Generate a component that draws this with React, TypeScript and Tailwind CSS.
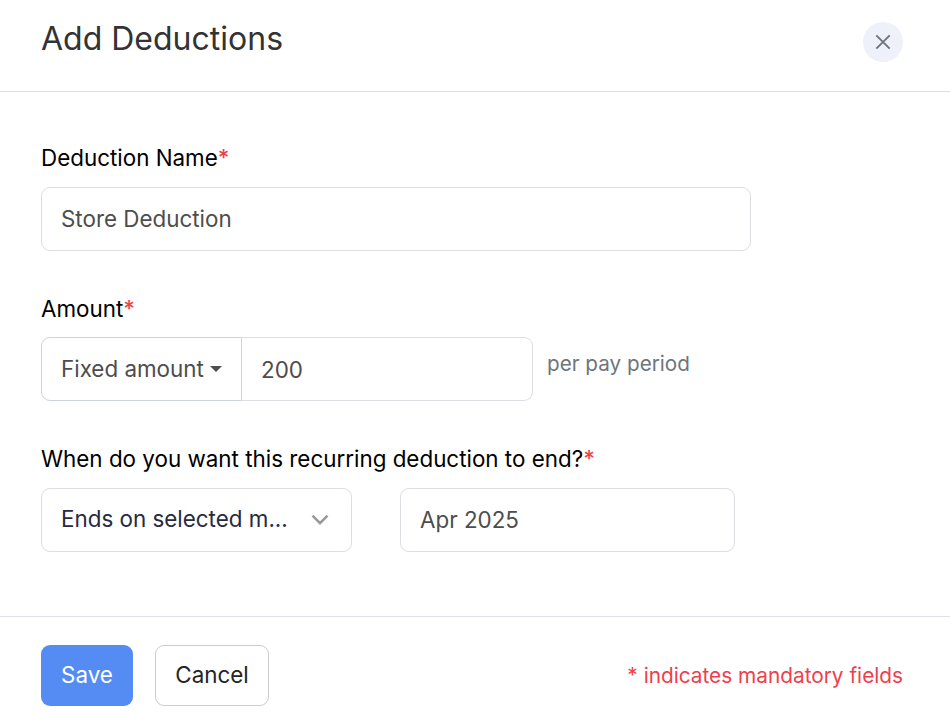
import { useState } from "react";
import type { ReactNode } from "react";

const FieldLabel = ({ children }: { children: ReactNode }) => (
	<label className="block text-[22.4px] leading-8 text-black">
		{children}
		<span className="font-medium text-[#f03e4d]">*</span>
	</label>
);

const CloseIcon = () => (
	<svg width="16" height="16" viewBox="0 0 16 16" fill="none">
		<path d="M1.3 1.3L14.7 14.7M14.7 1.3L1.3 14.7" stroke="#6c757d" strokeWidth="1.9" />
	</svg>
);

const ChevronIcon = () => (
	<svg width="18" height="12" viewBox="0 0 18 12" fill="none">
		<path d="M1.5 1.7L9 9.2L16.5 1.7" stroke="#999" strokeWidth="2.6" />
	</svg>
);

const CaretIcon = () => (
	<svg width="12" height="6" viewBox="0 0 12 6">
		<path d="M0 0H12L6 6Z" fill="#4d4d4d" />
	</svg>
);

export default function App() {
	const [name, setName] = useState("Store Deduction");
	const [amount, setAmount] = useState("200");
	const [endMonth, setEndMonth] = useState("Apr 2025");

	return (
		<div className="flex h-[722px] w-[950px] flex-col overflow-hidden bg-white font-[Inter,sans-serif]">
			<header className="flex h-[92px] shrink-0 items-start justify-between border-b border-[#dedede] pr-[47px] pl-[41px]">
				<h1 className="mt-[15px] text-[32px] leading-12 text-[#333]">
					Add Deductions
				</h1>
				<button
					type="button"
					aria-label="Close"
					className="mt-[22px] flex size-10 items-center justify-center rounded-full bg-[#eef1fa]"
				>
					<CloseIcon />
				</button>
			</header>

			<main className="flex h-[524px] shrink-0 flex-col pt-[50px] pl-[41px]">
				<section>
					<FieldLabel>Deduction Name</FieldLabel>
					<input
						className="mt-[13px] block h-16 w-[710px] rounded-[9px] border border-[#dedee2] px-[19px] pb-0.5 text-[22.4px] text-[#4d4d4d] outline-none"
						value={name}
						onChange={(e) => setName(e.target.value)}
					/>
				</section>

				<section className="mt-[42px]">
					<FieldLabel>Amount</FieldLabel>
					<div className="mt-[12px] flex h-16">
						<button
							type="button"
							className="flex w-[201px] items-center gap-[6px] rounded-l-[9px] border border-[#ced4da] pl-[19px] text-[22.4px] text-[#4d4d4d]"
						>
							Fixed amount
							<CaretIcon />
						</button>
						<input
							className="w-[291px] rounded-r-[9px] border border-l-0 border-[#dedee2] px-[19px] pt-0.5 text-[22.4px] text-[#4d4d4d] outline-none"
							value={amount}
							onChange={(e) => setAmount(e.target.value)}
						/>
						<span className="mt-[11px] ml-[14px] text-[20.7px] leading-8 text-[#6c757d]">
							per pay period
						</span>
					</div>
				</section>

				<section className="mt-[42px]">
					<FieldLabel>
						When do you want this recurring deduction to end?
					</FieldLabel>
					<div className="mt-[13px] flex h-16 gap-12">
						<button
							type="button"
							className="flex w-[311px] items-center justify-between rounded-[9px] border border-[#dedee2] pr-[22px] pl-[19px] text-[22.4px] text-[#272b41]"
						>
							<span className="pb-[3px]">Ends on selected m...</span>
							<ChevronIcon />
						</button>
						<input
							className="w-[335px] rounded-[9px] border border-[#dedee2] px-[19px] text-[22.4px] text-[#4d4d4d] outline-none"
							value={endMonth}
							onChange={(e) => setEndMonth(e.target.value)}
						/>
					</div>
				</section>
			</main>

			<footer className="flex h-[106px] shrink-0 items-start border-t border-[#dee2e6] pt-7 pr-[47px] pl-[41px]">
				<button
					type="button"
					className="h-[61px] w-[92px] rounded-[9px] bg-[#548cf3] pb-0.5 text-[22.4px] text-white"
				>
					Save
				</button>
				<button
					type="button"
					className="ml-[22px] h-[61px] w-[114px] rounded-[9px] border border-[#ccc] pb-0.5 text-[22.4px] text-[#212529]"
				>
					Cancel
				</button>
				<p className="mt-[15px] ml-auto text-[20.8px] leading-8 text-[#f03e4d]">
					* indicates mandatory fields
				</p>
			</footer>
		</div>
	);
}
